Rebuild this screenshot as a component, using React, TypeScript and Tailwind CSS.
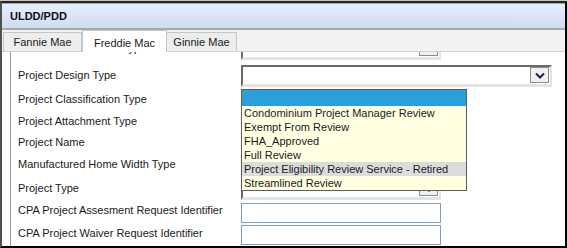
import React from "react";

function Chevron() {
  return (
    <svg width="10" height="7" viewBox="0 0 10 7">
      <polyline points="1,1.5 5,5.5 9,1.5" fill="none" stroke="#15234a" strokeWidth="2" />
    </svg>
  );
}

function Combo({ w }: { w: string }) {
  return (
    <div
      className={`${w} h-[22px] bg-white border-t-2 border-l-2 border-t-[#6a6a6a] border-l-[#6a6a6a] border-b-[3px] border-r-[2px] border-b-[#e4e4e4] border-r-[#e4e4e4] flex justify-end items-start`}
    >
      <div className="w-[19px] h-[16px] mr-[1px] bg-[#f0f0f0] border border-[#8c8c8c] flex items-center justify-center">
        <Chevron />
      </div>
    </div>
  );
}

function Label({ children, h = "h-[20px]" }: { children: React.ReactNode; h?: string }) {
  return (
    <div className={`w-[223px] shrink-0 ${h} flex items-center whitespace-nowrap`}>{children}</div>
  );
}

export default function App() {
  const items = [
    "Condominium Project Manager Review",
    "Exempt From Review",
    "FHA_Approved",
    "Full Review",
    "Project Eligibility Review Service - Retired",
    "Streamlined Review",
  ];
  return (
    <div className="w-[567px] h-[248px] overflow-hidden bg-white font-['Liberation_Sans',Arial,sans-serif] text-[11px] text-[#1a1a1a] flex flex-col border-t border-t-[#c8c8c8]">
      <div className="flex-1 min-h-0 flex flex-col border-t-2 border-t-[#262626] border-l-2 border-l-[#505050] border-r-2 border-r-black border-b-2 border-b-black">
        {/* title bar */}
        <div className="h-[27px] shrink-0 border-t border-t-[#a8a8a8] border-b-2 border-b-[#a9a9a9] bg-gradient-to-b from-[#e6f0fd] to-[#cddcf1] flex items-center pl-[8px]">
          <span className="font-bold text-[11px] text-[#111]">ULDD/PDD</span>
        </div>
        {/* tabs */}
        <div className="h-[22px] shrink-0 bg-[#f3f3f3] border-b border-b-[#d2d2d2] flex items-end pl-[1px]">
          <div className="w-[79px] h-[19px] bg-[#ededed] border border-b-0 border-[#c6c6c6] flex items-center justify-center pt-[1px]">
            Fannie Mae
          </div>
          <div className="w-[85px] h-[22px] -mb-px bg-white border border-b-0 border-[#c6c6c6] flex items-start justify-center pt-[4px]">
            Freddie Mac
          </div>
          <div className="w-[70px] h-[19px] bg-[#ededed] border border-b-0 border-l-0 border-[#c6c6c6] flex items-center justify-center pt-[1px]">
            Ginnie Mae
          </div>
        </div>
        {/* content */}
        <div className="flex-1 min-h-0 overflow-hidden bg-white ml-[8px] border-l border-l-[#9c9c9c] pl-[7px]">
          {/* row0, scrolled mostly out of view */}
          <div className="h-[8px] overflow-hidden flex flex-col justify-end">
            <div className="h-[24px] shrink-0 flex items-start pt-[2px]">
              <Label>Construction Method Type</Label>
              <Combo w="w-[200px]" />
            </div>
          </div>
          {/* Project Design Type */}
          <div className="h-[29px] flex items-start pt-[5px]">
            <Label>Project Design Type</Label>
            <div className="relative">
              <Combo w="w-[311px]" />
              <div className="absolute left-0 top-[24px] w-[226px] border border-[#5c5c5c] bg-[#ffffe1] z-10">
                <div className="h-[16px] bg-[#29a0dc]" />
                {items.map((t, i) => (
                  <div
                    key={t}
                    className={`h-[14px] leading-[14px] pl-[2px] whitespace-nowrap ${i === 4 ? "bg-[#dcdcdc]" : ""}`}
                  >
                    {t}
                  </div>
                ))}
              </div>
            </div>
          </div>
          <div className="h-[21px] flex items-center">
            <Label>Project Classification Type</Label>
          </div>
          <div className="h-[22px] flex items-center">
            <Label>Project Attachment Type</Label>
          </div>
          <div className="h-[21px] flex items-center">
            <Label>Project Name</Label>
          </div>
          <div className="h-[23px] flex items-center">
            <Label>Manufactured Home Width Type</Label>
          </div>
          <div className="h-[24px] flex items-start pt-[2px]">
            <Label>Project Type</Label>
            <Combo w="w-[200px]" />
          </div>
          <div className="h-[23px] flex items-start">
            <Label>CPA Project Assesment Request Identifier</Label>
            <div className="w-[200px] h-[20px] mt-[3px] border border-[#7f9db9] bg-white" />
          </div>
          <div className="h-[23px] flex items-start">
            <Label>CPA Project Waiver Request Identifier</Label>
            <div className="w-[200px] h-[20px] mt-[2px] border border-[#7f9db9] bg-white" />
          </div>
        </div>
      </div>
    </div>
  );
}
